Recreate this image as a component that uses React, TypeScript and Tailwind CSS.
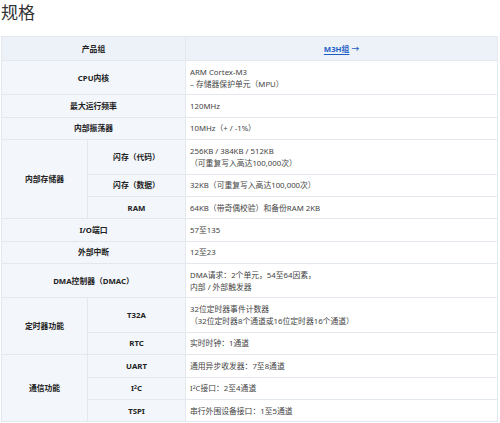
import { Fragment } from "react"

type Row = {
  group?: string
  groupSpan?: number
  label: React.ReactNode
  value: React.ReactNode[]
}

const rows: Row[] = [
  { label: "CPU内核", value: ["ARM Cortex-M3", "– 存储器保护单元（MPU）"] },
  { label: "最大运行频率", value: ["120MHz"] },
  { label: "内部振荡器", value: ["10MHz（+ / -1%）"] },
  { group: "内部存储器", groupSpan: 3, label: "闪存（代码）", value: ["256KB / 384KB / 512KB", "（可重复写入高达100,000次）"] },
  { label: "闪存（数据）", value: ["32KB（可重复写入高达100,000次）"] },
  { label: "RAM", value: ["64KB（带奇偶校验）和备份RAM 2KB"] },
  { label: "I/O端口", value: ["57至135"] },
  { label: "外部中断", value: ["12至23"] },
  { label: "DMA控制器（DMAC）", value: ["DMA请求：2个单元，54至64因素，", "内部 / 外部触发器"] },
  { group: "定时器功能", groupSpan: 2, label: "T32A", value: ["32位定时器事件计数器", "（32位定时器8个通道或16位定时器16个通道）"] },
  { label: "RTC", value: ["实时时钟：1通道"] },
  { group: "通信功能", groupSpan: 3, label: "UART", value: ["通用异步收发器：7至8通道"] },
  { label: <>I<sup className="text-[5px]">2</sup>C</>, value: [<>I<sup className="text-[5px]">2</sup>C接口：2至4通道</>] },
  { label: "TSPI", value: ["串行外围设备接口：1至5通道"] },
]

// rows that sit under a rowspan group cell
const grouped = new Set([4, 5, 10, 12, 13])

const th = "border border-[#e3e8ee] bg-[#f3f6fb] font-bold text-[#222] text-center align-middle px-1 py-[4.7px]"
const td = "border border-[#e3e8ee] bg-white text-[#444] text-left align-middle px-[4px] py-[4.7px]"

export default function App() {
  return (
    <div className="w-[500px] h-[423px] overflow-hidden bg-white font-['Noto_Sans','Noto_Sans_CJK_SC',sans-serif]">
      <h2 className="text-[17px] leading-[26px] text-[#333] font-normal pl-[1px] h-[36px]">规格</h2>
      <div className="pl-[1px]">
        <table className="w-[497px] border-collapse table-fixed text-[7.8px] leading-[12px]">
          <colgroup>
            <col className="w-[86px]" />
            <col className="w-[98px]" />
            <col />
          </colgroup>
          <tbody>
            <tr>
              <th colSpan={2} className="border border-[#e3e8ee] bg-[#edf2f9] font-bold text-[#222] text-center py-[5.5px]">产品组</th>
              <th className="border border-[#e3e8ee] bg-[#edf2f9] text-center py-[5.5px]">
                <a className="font-bold text-[#1c5fc4] underline underline-offset-2 decoration-[1px]">M3H组</a>
                <span className="text-[#1c5fc4] ml-[2px]">→</span>
              </th>
            </tr>
            {rows.map((r, i) => (
              <tr key={i}>
                {r.group && (
                  <th rowSpan={r.groupSpan} className={th}>{r.group}</th>
                )}
                {r.group || grouped.has(i) ? (
                  <th className={th}>{r.label}</th>
                ) : (
                  <th colSpan={2} className={th}>{r.label}</th>
                )}
                <td className={td}>
                  {r.value.map((v, j) => (
                    <Fragment key={j}>
                      {j > 0 && <br />}
                      {v}
                    </Fragment>
                  ))}
                </td>
              </tr>
            ))}
          </tbody>
        </table>
      </div>
    </div>
  )
}
